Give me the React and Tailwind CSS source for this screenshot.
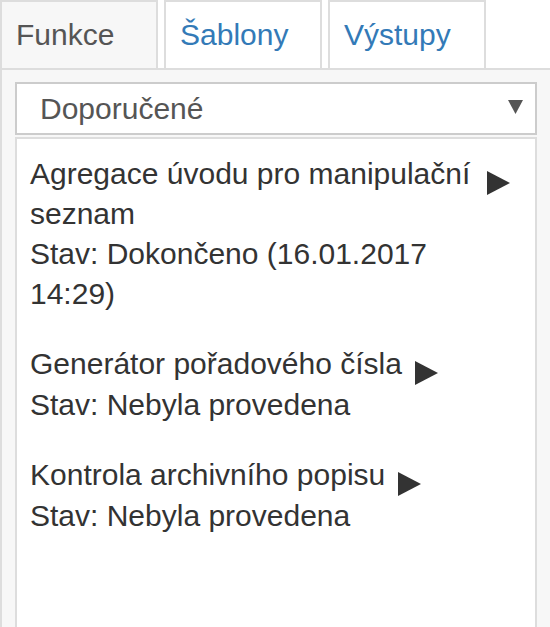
import React from 'react'

const items = [
  { title: 'Agregace úvodu pro manipulační seznam', state: 'Stav: Dokončeno (16.01.2017 14:29)' },
  { title: 'Generátor pořadového čísla', state: 'Stav: Nebyla provedena' },
  { title: 'Kontrola archivního popisu', state: 'Stav: Nebyla provedena' },
]

const tabs = ['Funkce', 'Šablony', 'Výstupy']

const App = () => {
  return (
    <div className="w-[550px] h-[627px] overflow-hidden bg-white text-[30px] leading-[40px] text-[#333]" style={{ fontFamily: '"Liberation Sans", Arial, sans-serif' }}>
      {/* tabs */}
      <div className="flex gap-[6px] h-[70px] border-b-2 border-[#ddd]">
        {tabs.map((tab, index) => (
          <div
            key={tab}
            className={`w-[158px] h-[68px] border-2 border-b-0 border-[#ddd] pl-[14px] pt-[13px] ${index === 0 ? 'bg-[#f7f7f7] text-[#555]' : 'bg-white text-[#337ab7]'}`}
          >
            {tab}
          </div>
        ))}
      </div>

      {/* panel */}
      <div className="bg-[#f7f7f7] border-l-2 border-[#ddd] pl-[13px] pr-[13px] pt-[12px] h-[557px]">
        <div className="h-[53px] border-2 border-[#ccc] bg-white flex items-center justify-between pl-[23px] pr-[12px] text-[#555]">
          <span>Doporučené</span>
          <svg width="15" height="14" viewBox="0 0 15 14" className="mt-[-4px]">
            <polygon points="0,0 15,0 7.5,14" fill="#555" />
          </svg>
        </div>

        <div className="mt-[2px] h-[500px] border-2 border-[#ddd] bg-white pl-[13px] pr-[25px] pt-[15px]">
          {items.map((item) => (
            <div key={item.title} className="mb-[30px]">
              <div className="flex items-start">
                <span>{item.title}</span>
                <svg width="23" height="24" viewBox="0 0 23 24" className="shrink-0 ml-[13px] mt-[17px]">
                  <polygon points="0,0 23,12 0,24" fill="#333" />
                </svg>
              </div>
              <div>{item.state}</div>
            </div>
          ))}
        </div>
      </div>
    </div>
  )
}

export default App
